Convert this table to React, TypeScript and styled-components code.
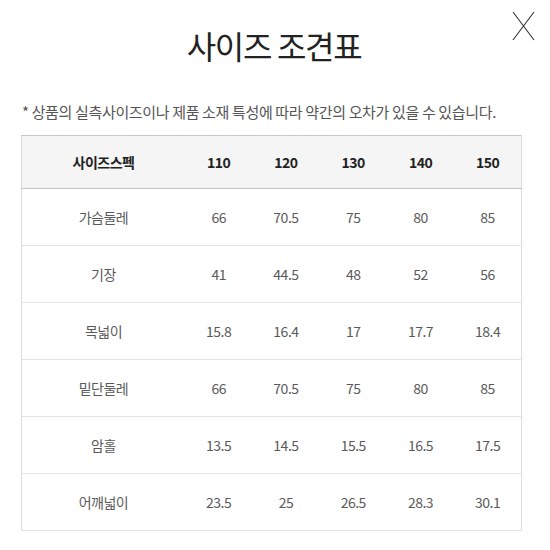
import React from "react";
import styled, { createGlobalStyle } from "styled-components";

const GlobalStyle = createGlobalStyle`
  html, body {
    margin: 0;
    padding: 0;
    background: #ffffff;
    font-family: "Noto Sans CJK KR", "Noto Sans", sans-serif;
  }
`;

const Popup = styled.div`
  position: relative;
  width: 550px;
  height: 550px;
  box-sizing: border-box;
  padding: 22px 28px 0 21px;
`;

const Title = styled.h1`
  margin: 0;
  text-align: center;
  font-size: 32px;
  font-weight: 400;
  line-height: 46px;
  letter-spacing: -1.3px;
  color: #222;
  padding-left: 5px;
`;

const CloseButton = styled.button`
  position: absolute;
  top: 11px;
  right: 15px;
  width: 23px;
  height: 30px;
  padding: 0;
  border: 0;
  background: none;
  cursor: pointer;
`;

const Notice = styled.p`
  margin: 34px 0 13px 1px;
  font-size: 15px;
  line-height: 20px;
  letter-spacing: -0.35px;
  color: #555;
  white-space: nowrap;
`;

const Table = styled.table`
  width: 501px;
  border-collapse: collapse;
  table-layout: fixed;
  border: 1px solid #dcdcdc;
  border-top-color: #c8c8c8;
`;

const HeadCell = styled.th<{ $first?: boolean }>`
  height: 52px;
  padding: 0;
  background: #f5f5f5;
  border-bottom: 1px solid #c4c4c4;
  font-size: 14px;
  font-weight: 700;
  color: #222;
  text-align: center;
  letter-spacing: -0.5px;
  width: ${(p) => (p.$first ? "163px" : "auto")};
`;

const Cell = styled.td`
  height: 56px;
  padding: 0;
  border-bottom: 1px solid #e3e3e3;
  font-size: 14px;
  color: #5a5a5a;
  text-align: center;
  letter-spacing: -0.5px;
`;

const sizes = ["110", "120", "130", "140", "150"];

const rows: [string, string[]][] = [
  ["가슴둘레", ["66", "70.5", "75", "80", "85"]],
  ["기장", ["41", "44.5", "48", "52", "56"]],
  ["목넓이", ["15.8", "16.4", "17", "17.7", "18.4"]],
  ["밑단둘레", ["66", "70.5", "75", "80", "85"]],
  ["암홀", ["13.5", "14.5", "15.5", "16.5", "17.5"]],
  ["어깨넓이", ["23.5", "25", "26.5", "28.3", "30.1"]],
];

export default function App() {
  return (
    <>
      <GlobalStyle />
      <Popup>
        <Title>사이즈 조견표</Title>
        <CloseButton aria-label="닫기">
          <svg width="23" height="30" viewBox="0 0 23 30">
            <path d="M1 1 L22 29 M22 1 L1 29" stroke="#333" strokeWidth="1.1" fill="none" />
          </svg>
        </CloseButton>
        <Notice>* 상품의 실측사이즈이나 제품 소재 특성에 따라 약간의 오차가 있을 수 있습니다.</Notice>
        <Table>
          <thead>
            <tr>
              <HeadCell $first>사이즈스펙</HeadCell>
              {sizes.map((s) => (
                <HeadCell key={s}>{s}</HeadCell>
              ))}
            </tr>
          </thead>
          <tbody>
            {rows.map(([name, values]) => (
              <tr key={name}>
                <Cell>{name}</Cell>
                {values.map((v, i) => (
                  <Cell key={i}>{v}</Cell>
                ))}
              </tr>
            ))}
          </tbody>
        </Table>
      </Popup>
    </>
  );
}
